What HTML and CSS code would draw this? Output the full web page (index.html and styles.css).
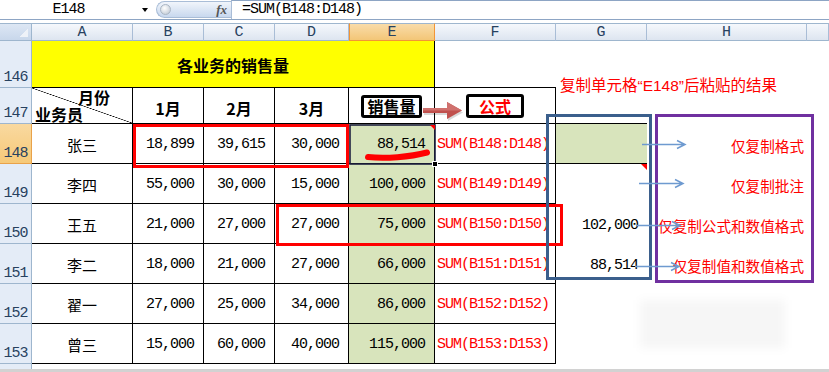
FILE: index.html
```html
<!DOCTYPE html>
<html lang="zh-CN">
<head>
<meta charset="utf-8">
<title>各业务的销售量</title>
<link rel="stylesheet" href="styles.css">
</head>
<body>
<div class="app">
  <div class="formula-bar">
    <div class="namebox">E148</div>
    <div class="dropdown"></div>
    <div class="fx-pill"><span class="knob"></span><span class="fx">fx</span></div>
    <div class="formula">=SUM(B148:D148)</div>
  </div>

  <div class="sheet">
    <div class="corner"></div>
    <div class="colh">A</div>
    <div class="colh">B</div>
    <div class="colh">C</div>
    <div class="colh">D</div>
    <div class="colh sel">E</div>
    <div class="colh">F</div>
    <div class="colh">G</div>
    <div class="colh">H</div>
    <div class="colh"></div>

    <div class="rowh">146</div>
    <div class="title">各业务的销售量</div>
    <div class="bb"></div>
    <div></div><div></div><div></div>

    <div class="rowh">147</div>
    <div class="c diag"><span class="d-top">月份</span><span class="d-bot">业务员</span></div>
    <div class="c head">1月</div>
    <div class="c head">2月</div>
    <div class="c head">3月</div>
    <div class="c head"><span class="tag">销售量</span></div>
    <div class="c head"><span class="tag red">公式</span></div>
    <div class="bb"></div>
    <div></div><div></div>

    <div class="rowh sel">148</div>
    <div class="c name">张三</div>
    <div class="c num">18,899</div>
    <div class="c num">39,615</div>
    <div class="c num">30,000</div>
    <div class="c num green">88,514</div>
    <div class="c fml">SUM(B148:D148)</div>
    <div class="bb green"></div>
    <div class="note">仅复制格式</div>
    <div></div>

    <div class="rowh">149</div>
    <div class="c name">李四</div>
    <div class="c num">55,000</div>
    <div class="c num">30,000</div>
    <div class="c num">15,000</div>
    <div class="c num green">100,000</div>
    <div class="c fml">SUM(B149:D149)</div>
    <div></div>
    <div class="note">仅复制批注</div>
    <div></div>

    <div class="rowh">150</div>
    <div class="c name">王五</div>
    <div class="c num">21,000</div>
    <div class="c num">27,000</div>
    <div class="c num">27,000</div>
    <div class="c num green">75,000</div>
    <div class="c fml">SUM(B150:D150)</div>
    <div class="num plain">102,000</div>
    <div class="note">仅复制公式和数值格式</div>
    <div></div>

    <div class="rowh">151</div>
    <div class="c name">李二</div>
    <div class="c num">18,000</div>
    <div class="c num">21,000</div>
    <div class="c num">27,000</div>
    <div class="c num green">66,000</div>
    <div class="c fml">SUM(B151:D151)</div>
    <div class="num plain">88,514</div>
    <div class="note">仅复制值和数值格式</div>
    <div></div>

    <div class="rowh">152</div>
    <div class="c name">翟一</div>
    <div class="c num">27,000</div>
    <div class="c num">25,000</div>
    <div class="c num">34,000</div>
    <div class="c num green">86,000</div>
    <div class="c fml">SUM(B152:D152)</div>
    <div></div><div></div><div></div>

    <div class="rowh">153</div>
    <div class="c name">曾三</div>
    <div class="c num">15,000</div>
    <div class="c num">60,000</div>
    <div class="c num">40,000</div>
    <div class="c num green">115,000</div>
    <div class="c fml">SUM(B153:D153)</div>
    <div></div><div></div><div></div>

    <div class="rowh tail"></div>
    <div class="rest"></div>
  </div>
  <div class="hscroll"></div>

  <div class="caption">复制单元格“E148”后粘贴的结果</div>
  <div class="smudge"></div>

  <svg class="marks" width="829" height="372" viewBox="0 0 829 372" aria-hidden="true">
    <path d="M368 157 C 385 159, 410 157, 427 152.5" stroke="#ff0000" stroke-width="6" stroke-linecap="round" fill="none"/>
    <rect x="350" y="125" width="85" height="39" fill="none" stroke="#1f2140" stroke-width="1.6"/>
    <rect x="432.5" y="161.5" width="5" height="5" fill="#000" stroke="#fff" stroke-width="1"/>
    <polygon points="430,125 435,125 435,130" fill="#ff0000"/>
    <polygon points="641,164 647,164 647,170" fill="#ff0000"/>

    <path d="M424 110 H448 V104 L463 112.5 L448 121 V115 H424 Z" fill="#000" opacity="0.15"/>
    <path d="M423 108 H447 V102 L462 110.5 L447 119 V113 H423 Z" fill="#c0504d"/>
    <path d="M423 108 H447 V102 L462 110.5 L447 110.5 H423 Z" fill="#d0716e"/>

    <rect x="134.5" y="125.5" width="213" height="41" fill="none" stroke="#ff0000" stroke-width="3"/>
    <rect x="277.5" y="205.5" width="284" height="39" fill="none" stroke="#ff0000" stroke-width="3"/>
    <rect x="547.5" y="115.5" width="103" height="163" fill="none" stroke="#3b5f8c" stroke-width="3"/>
    <rect x="656.5" y="115.5" width="156" height="166" fill="none" stroke="#7030a0" stroke-width="3"/>

    <g stroke="#6e9ad0" stroke-width="1.5" fill="none">
      <path d="M642 144.5 H685 M677 140.5 L685 144.5 L677 148.5"/>
      <path d="M639 183.5 H683 M675 179.5 L683 183.5 L675 187.5"/>
      <path d="M636 225.5 H680 M672 221.5 L680 225.5 L672 229.5"/>
      <path d="M635 266.5 H679 M671 262.5 L679 266.5 L671 270.5"/>
    </g>
  </svg>
</div>
</body>
</html>
```
FILE: styles.css
```css
* { box-sizing: border-box; }
html, body { margin: 0; padding: 0; }
body {
  width: 829px;
  height: 372px;
  overflow: hidden;
  background: #fff;
  font-family: "Noto Sans CJK SC", sans-serif;
  color: #000;
}
.app { position: relative; width: 829px; height: 372px; }

/* formula bar */
.formula-bar {
  display: flex;
  height: 20px;
  border-bottom: 1px solid #8da5c4;
}
.namebox {
  width: 137px;
  font: 15px/19px "Liberation Mono", monospace;
  letter-spacing: -1px;
  text-align: center;
}
.dropdown {
  width: 0; height: 0;
  margin: 8px 0 0 5px;
  border-left: 3.5px solid transparent;
  border-right: 3.5px solid transparent;
  border-top: 4px solid #000;
}
.fx-pill {
  margin: 1px 0 1px 8px;
  width: 75px;
  display: flex;
  align-items: center;
  justify-content: space-between;
  padding: 0 4px 0 3px;
  background: linear-gradient(#f1f5fb, #c8d8ee);
  border: 1px solid #a9bdd7;
  border-right: none;
  border-radius: 9px 0 0 9px;
}
.knob {
  width: 11px; height: 11px;
  border-radius: 50%;
  background: radial-gradient(circle at 40% 35%, #ffffff, #b9c3cf);
  border: 1px solid #aab6c4;
}
.fx {
  font: italic bold 13px "Liberation Serif", serif;
  color: #555;
}
.formula {
  flex: 1;
  border-top: 1px solid #8da5c4;
  border-left: 1px solid #a9bdd7;
  padding-left: 10px;
  font: 15px/18px "Liberation Mono", monospace;
  letter-spacing: -1px;
}

/* sheet grid */
.sheet {
  display: grid;
  margin-top: 3px;
  grid-template-columns: 32px 101px 71px 71px 74px 86px 121px 91px 160px 22px;
  grid-template-rows: 18px 47px 36px repeat(6, 40px) 5px;
}
.corner {
  position: relative;
  background: linear-gradient(#dde7f4, #c8d7eb);
  border-top: 1px solid #9eb6ce;
  border-bottom: 1px solid #9eb6ce;
  border-right: 1px solid #9eb6ce;
}
.corner::after {
  content: "";
  position: absolute;
  right: 3px; bottom: 3px;
  width: 9px; height: 9px;
  background: linear-gradient(135deg, transparent 50%, #eef2f8 50%);
}
.colh {
  display: flex;
  align-items: center;
  justify-content: center;
  font: 15px/1 "Liberation Mono", monospace;
  color: #27415f;
  background: linear-gradient(#f5f8fc, #dde5f0);
  border-top: 1px solid #9eb6ce;
  border-bottom: 1px solid #9eb6ce;
  border-right: 1px solid #a9bdd6;
  padding-top: 1px;
}
.colh.sel {
  background: linear-gradient(#f9dcaa, #f3c677);
  border-left: 1px solid #f29536;
  border-bottom-color: #f29536;
  border-right-color: #f29536;
}
.rowh {
  display: flex;
  align-items: flex-end;
  justify-content: center;
  font: 15px/15px "Liberation Mono", monospace;
  letter-spacing: -1px;
  color: #27415f;
  background: #e4ecf7;
  border-right: 1px solid #9eb6ce;
  border-bottom: 1px solid #9eb6ce;
  padding-bottom: 2px;
}
.rowh.sel {
  background: linear-gradient(#f9d9a0, #f6c978);
  border-bottom-color: #e9a24a;
  border-right-color: #e9a24a;
}
.rowh.tail { border-bottom: none; }
.rest { grid-column: 2 / span 9; }

.title {
  grid-column: 2 / span 5;
  display: flex;
  align-items: center;
  justify-content: center;
  background: #ffff00;
  border-right: 1px solid #000;
  border-bottom: 1px solid #000;
  font-weight: bold;
  font-size: 16px;
  padding-top: 1px;
}
.bb { border-bottom: 1px solid #000; }

.c {
  display: flex;
  align-items: center;
  border-right: 1px solid #000;
  border-bottom: 1px solid #000;
  padding-top: 2px;
}
.head {
  justify-content: center;
  font-weight: bold;
  font-size: 16px;
  padding-top: 4px;
}
.diag {
  flex-direction: column;
  align-items: stretch;
  justify-content: space-between;
  padding: 1px 0 0 3px;
  font-weight: bold;
  font-size: 16px;
  line-height: 17px;
  background: linear-gradient(to top right, transparent calc(50% - 0.6px), #000 50%, transparent calc(50% + 0.6px));
}
.d-top { align-self: flex-end; margin-right: 22px; }
.d-bot { align-self: flex-start; }
.tag {
  display: inline-block;
  border: 3px solid #000;
  border-radius: 3px;
  padding: 0 3px;
  line-height: 17px;
  margin-top: -3px;
}
.tag.red { color: #ff0000; padding: 0 10px; line-height: 18px; }

.name {
  justify-content: center;
  font-size: 15px;
}
.num {
  display: flex;
  align-items: center;
  justify-content: flex-end;
  padding-right: 9px;
  font-family: "Liberation Mono", monospace;
  font-size: 15px;
  letter-spacing: -1px;
}
.num.plain { padding-top: 2px; }
.green { background: #d8e4bc; }
.fml {
  padding-left: 2px;
  font-family: "Liberation Mono", monospace;
  font-size: 15px;
  letter-spacing: -1px;
  color: #ff0000;
  white-space: nowrap;
  overflow: hidden;
}
.note {
  display: flex;
  align-items: center;
  justify-content: flex-end;
  padding: 2px 3px 0 0;
  color: #ff0000;
  font-size: 14.6px;
  white-space: nowrap;
}

.hscroll {
  height: 3px;
  background: #d2d2d2;
}

/* annotations over the sheet */
.caption {
  position: absolute;
  left: 560px;
  top: 77px;
  font-family: "Liberation Sans", "Noto Sans CJK SC", sans-serif;
  font-size: 15.5px;
  line-height: 17px;
  color: #ff0000;
  white-space: nowrap;
}
.smudge {
  position: absolute;
  left: 640px;
  top: 300px;
  width: 145px;
  height: 48px;
  background: rgba(0, 0, 0, 0.035);
  filter: blur(5px);
}
.marks {
  position: absolute;
  left: 0;
  top: 0;
  pointer-events: none;
}
```
